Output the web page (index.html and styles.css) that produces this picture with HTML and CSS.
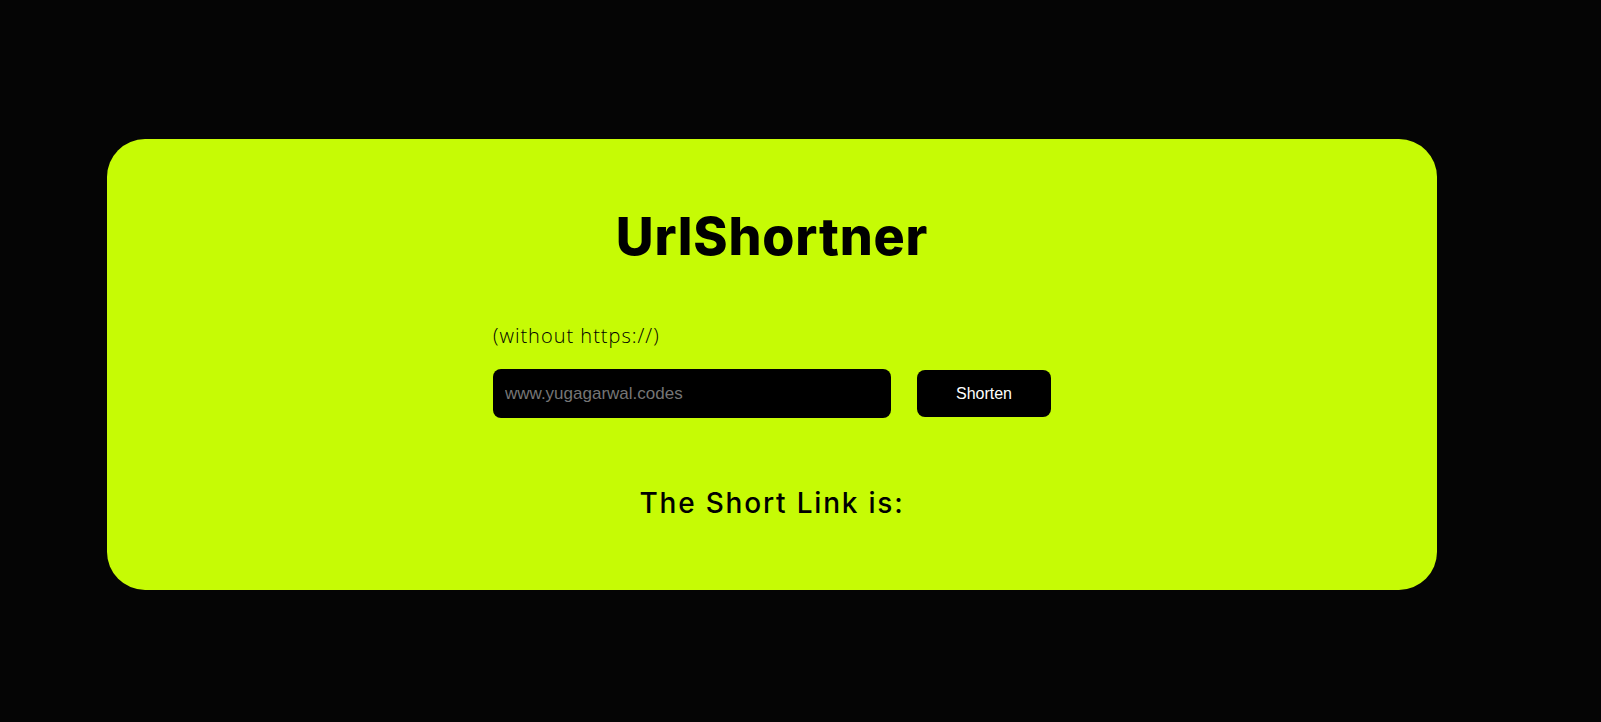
FILE: index.html
```html
<!DOCTYPE html>
<html lang="en">
<head>
<meta charset="utf-8">
<title>UrlShortner</title>
<link rel="stylesheet" href="styles.css">
</head>
<body>
<main class="card">
  <h1 class="title">UrlShortner</h1>
  <form class="form">
    <label class="hint" for="url">(without https://)</label>
    <div class="row">
      <input id="url" class="url-input" type="text" placeholder="www.yugagarwal.codes">
      <button class="btn" type="button">Shorten</button>
    </div>
  </form>
  <h2 class="result">The Short Link is:</h2>
</main>
</body>
</html>
```
FILE: styles.css
```css
html, body {
  margin: 0;
  padding: 0;
  background: #050505;
  height: 100%;
}
body {
  padding-top: 139px;
  box-sizing: border-box;
  font-family: Inter, "Open Sans", sans-serif;
}
.card {
  margin-left: 107px;
  width: 1330px;
  height: 451px;
  box-sizing: border-box;
  background: #c6fb05;
  border-radius: 38px;
  display: flex;
  flex-direction: column;
  align-items: center;
  padding-top: 68px;
}
.title {
  margin: 0;
  font-family: Inter, "Open Sans", sans-serif;
  font-weight: 800;
  font-size: 52px;
  line-height: 60px;
  letter-spacing: 0.8px;
  color: #000;
}
.form {
  margin-top: 56px;
  display: flex;
  flex-direction: column;
  align-items: flex-start;
}
.hint {
  font-family: "Open Sans", sans-serif;
  font-weight: 300;
  font-size: 20px;
  line-height: 26px;
  letter-spacing: 1px;
  color: #000;
}
.row {
  margin-top: 20px;
  display: flex;
  align-items: center;
  gap: 26px;
}
.url-input {
  width: 398px;
  height: 49px;
  box-sizing: border-box;
  border: none;
  border-radius: 8px;
  background: #000;
  color: #fff;
  padding: 0 12px;
  font-family: "Liberation Sans", Arial, sans-serif;
  font-size: 17px;
  outline: none;
}
.url-input::placeholder {
  color: #757575;
}
.btn {
  width: 134px;
  height: 47px;
  border: none;
  border-radius: 8px;
  background: #000;
  color: #fff;
  font-family: "Liberation Sans", Arial, sans-serif;
  font-size: 16px;
  cursor: pointer;
}
.result {
  margin: 67px 0 0;
  font-family: Inter, "Open Sans", sans-serif;
  font-weight: 500;
  font-size: 28px;
  line-height: 36px;
  letter-spacing: 1.8px;
  color: #000;
}
```
